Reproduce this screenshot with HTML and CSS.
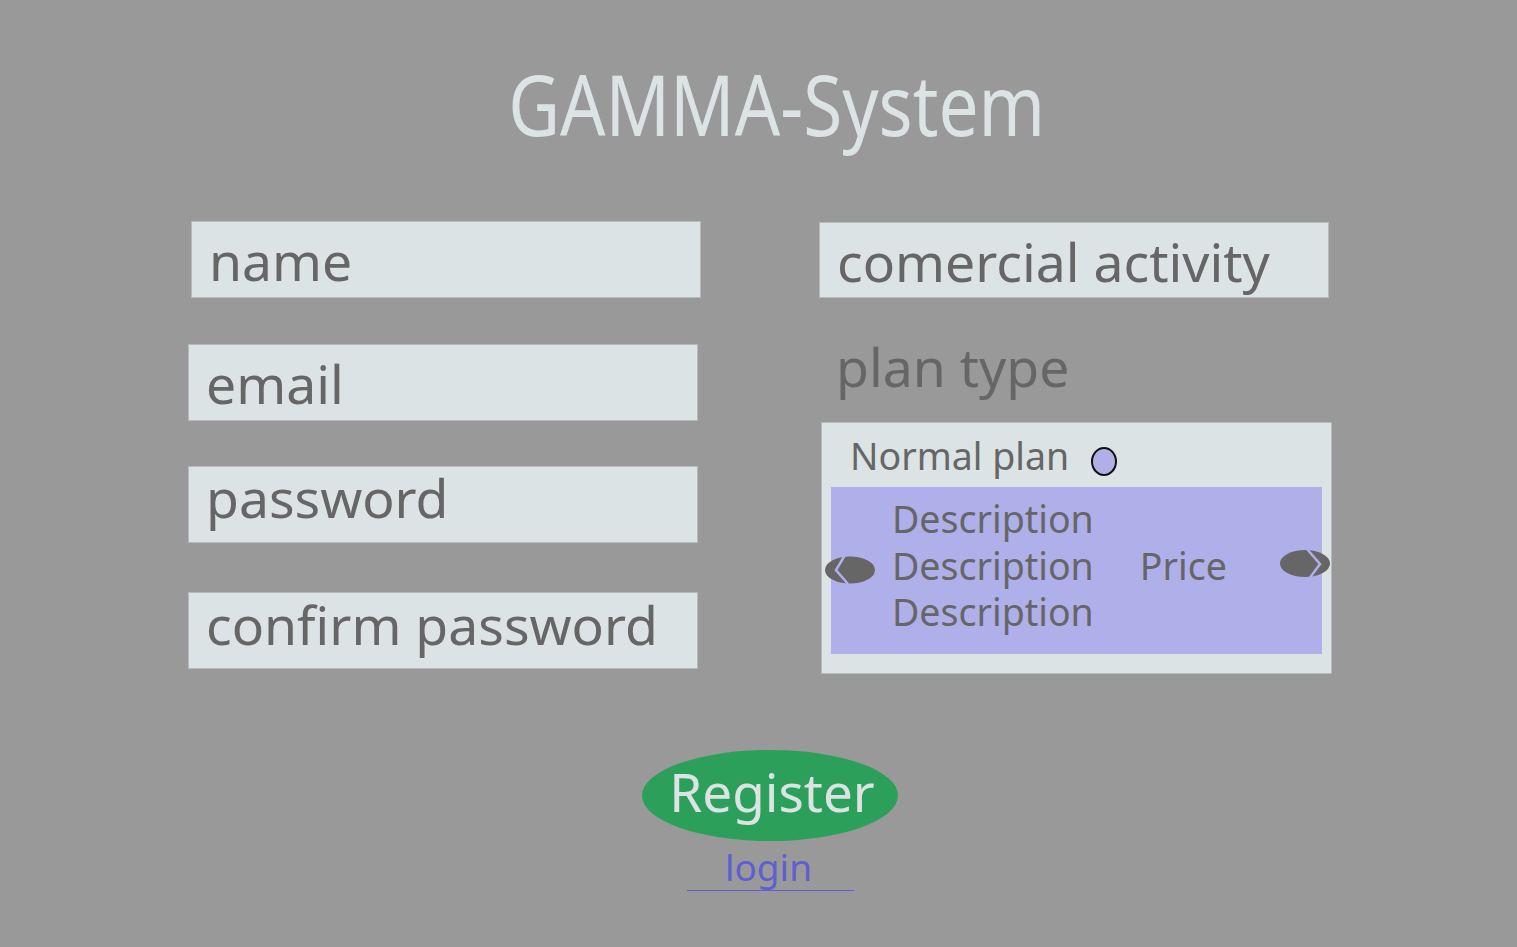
FILE: index.html
```html
<!DOCTYPE html>
<html lang="en">
<head>
<meta charset="utf-8">
<title>GAMMA-System</title>
<link rel="stylesheet" href="styles.css">
</head>
<body>
<main class="page">
  <header class="masthead">
    <h1 class="title"><span class="title-text">GAMMA-System</span></h1>
  </header>
  <section class="form-grid">
    <div class="col col-left">
      <div class="field field-name">name</div>
      <div class="field field-email">email</div>
      <div class="field field-low field-password">password</div>
      <div class="field field-low field-confirm">confirm password</div>
    </div>
    <div class="col col-right">
      <div class="field field-activity">comercial activity</div>
      <div class="label-plan">plan type</div>
      <div class="plan-box">
        <div class="plan-head">
          <span class="plan-name">Normal plan</span>
          <span class="radio"></span>
        </div>
        <div class="plan-card">
          <svg class="arrow arrow-left" width="56" height="42" viewBox="0 0 56 42">
            <ellipse cx="28" cy="25" rx="25" ry="13.5" fill="#666666"/>
            <polyline points="26,5 14,25 26,39" fill="none" stroke="#afafe9" stroke-width="2.5"/>
          </svg>
          <div class="plan-desc">
            <div class="desc-line">Description</div>
            <div class="desc-line">Description</div>
            <div class="desc-line">Description</div>
          </div>
          <div class="plan-price">Price</div>
          <svg class="arrow arrow-right" width="58" height="42" viewBox="0 0 58 42">
            <ellipse cx="29" cy="19.5" rx="25" ry="13.5" fill="#666666"/>
            <polyline points="31,5 44,20 33,35" fill="none" stroke="#afafe9" stroke-width="2.5"/>
          </svg>
        </div>
      </div>
    </div>
  </section>
  <footer class="actions">
    <button class="register" type="button">Register</button>
    <a class="login" href="#">login</a>
  </footer>
</main>
</body>
</html>
```
FILE: styles.css
```css
html, body {
  margin: 0;
  padding: 0;
}
body {
  background: #999999;
  font-family: "Noto Sans", "Open Sans", sans-serif;
  color: #666666;
  width: 1517px;
  height: 947px;
  overflow: hidden;
}
.page {
  display: flex;
  flex-direction: column;
}
.masthead {
  padding-top: 62px;
  padding-left: 37px;
  text-align: center;
}
.title {
  margin: 0;
  font-size: 84px;
  line-height: 84px;
  font-weight: 400;
  color: #dbe3e5;
}
.title-text {
  display: inline-block;
  transform: scaleX(0.848);
  transform-origin: center;
}
.form-grid {
  margin-top: 75px;
  padding-left: 188px;
  display: grid;
  grid-template-columns: 513px 513px;
  column-gap: 118px;
  align-items: start;
}
.col {
  display: flex;
  flex-direction: column;
}
.field {
  box-sizing: border-box;
  width: 510px;
  height: 77px;
  background: #dbe3e4;
  border: 1px solid #b5bbbd;
  font-size: 53.5px;
  line-height: 74px;
  padding: 2px 0 0 17px;
  white-space: nowrap;
}
.field-name {
  margin-left: 3px;
}
.field-email {
  margin-top: 46px;
}
.field-low {
  line-height: 62px;
  padding-top: 0;
  padding-bottom: 13px;
}
.field-password {
  margin-top: 45px;
}
.field-confirm {
  margin-top: 49px;
  line-height: 64px;
  padding-bottom: 11px;
}
.field-activity {
  margin-top: 1px;
  height: 76px;
  line-height: 73px;
}
.label-plan {
  margin-top: 37px;
  font-size: 53.5px;
  line-height: 64px;
  padding-left: 17px;
}
.plan-box {
  box-sizing: border-box;
  margin-top: 23px;
  margin-left: 2px;
  width: 511px;
  height: 252px;
  background: #dbe3e4;
  border: 1px solid #b5bbbd;
  padding: 10px 0 0 9px;
}
.plan-head {
  display: flex;
  align-items: flex-start;
  padding-left: 19px;
}
.plan-name {
  font-size: 37.5px;
  line-height: 46px;
}
.radio {
  box-sizing: border-box;
  width: 26px;
  height: 29px;
  margin-top: 14px;
  margin-left: 22px;
  border: 2px solid #111111;
  border-radius: 50%;
  background: #b0b0e8;
}
.plan-card {
  position: relative;
  margin-top: 8px;
  width: 491px;
  height: 167px;
  background: #afafe9;
  box-sizing: border-box;
  padding: 9px 0 0 61px;
  display: flex;
  align-items: flex-start;
  font-size: 37.5px;
  line-height: 46.5px;
}
.plan-desc {
  display: flex;
  flex-direction: column;
}
.plan-price {
  margin-top: 46.5px;
  margin-left: 46px;
}
.arrow {
  position: absolute;
  display: block;
}
.arrow-left {
  left: -9px;
  top: 58px;
}
.arrow-right {
  left: 445px;
  top: 57px;
}
.actions {
  margin-top: 76px;
  padding-left: 23px;
  display: flex;
  flex-direction: column;
  align-items: center;
}
.register {
  width: 256px;
  height: 91px;
  margin: 0;
  padding: 0 0 7px 4px;
  border: none;
  border-radius: 50%;
  background: #2ca05a;
  color: #dbe3e5;
  font-family: "Noto Sans", "Open Sans", sans-serif;
  font-size: 53px;
  line-height: 84px;
  cursor: pointer;
}
.login {
  margin-top: 3px;
  display: inline-block;
  width: 167px;
  padding-right: 3px;
  box-sizing: border-box;
  text-align: center;
  font-size: 37px;
  line-height: 46px;
  color: #5f5fd3;
  text-decoration: none;
  border-bottom: 1.5px solid #5f5fd3;
}
```
